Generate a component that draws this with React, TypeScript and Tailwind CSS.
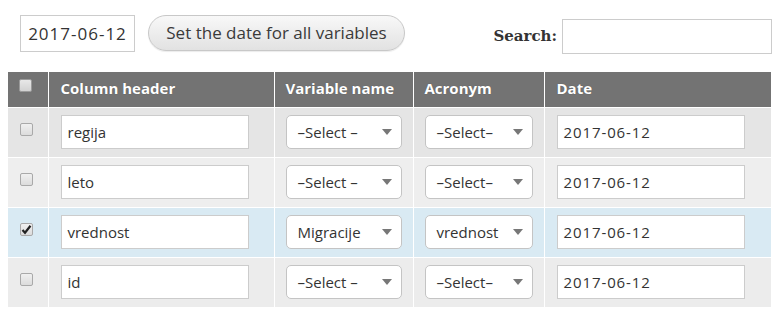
import React from 'react';

type Row = { header: string; variable: string; acronym: string; date: string; checked?: boolean };

const rows: Row[] = [
  { header: 'regija', variable: '–Select –', acronym: '–Select–', date: '2017-06-12' },
  { header: 'leto', variable: '–Select –', acronym: '–Select–', date: '2017-06-12' },
  { header: 'vrednost', variable: 'Migracije', acronym: 'vrednost', date: '2017-06-12', checked: true },
  { header: 'id', variable: '–Select –', acronym: '–Select–', date: '2017-06-12' },
];

const rowBg = ['bg-[#e5e5e5]', 'bg-[#eeeeee]', 'bg-[#d9eaf3]', 'bg-[#ececec]'];

function Check({ checked, header }: { checked?: boolean; header?: boolean }) {
  return (
    <span
      className={
        'flex h-[13px] w-[13px] items-center justify-center rounded-[2px] border ' +
        (header
          ? 'border-[#9a9a9a] bg-gradient-to-b from-[#e8e8e8] to-[#d2d2d2]'
          : 'border-[#a9a9a9] bg-gradient-to-b from-[#f0f0f0] to-[#dcdcdc]')
      }
    >
      {checked && (
        <svg width="11" height="11" viewBox="0 0 11 11">
          <path d="M1.5 6 L4 8.8 L9.5 1.8" fill="none" stroke="#222" strokeWidth="2.2" />
        </svg>
      )}
    </span>
  );
}

function Select({ value, w }: { value: string; w: string }) {
  return (
    <div
      className={
        'flex h-[34px] items-center justify-between rounded-[5px] border border-[#c4c4c4] bg-white pl-[11px] pr-[9px] ' + w
      }
    >
      <span className="text-[15px] text-[#333]">{value}</span>
      <svg width="10" height="6" viewBox="0 0 10 6">
        <path d="M0 0 H10 L5 6 Z" fill="#777" />
      </svg>
    </div>
  );
}

function TextBox({ value, date }: { value: string; date?: boolean }) {
  return (
    <div
      className={
        'flex h-[34px] w-[188px] items-center border border-[#cccccc] bg-white px-[6px] text-[15px] text-[#333] ' +
        (date ? 'tracking-[0.9px]' : '')
      }
    >
      {value}
    </div>
  );
}

export default function App() {
  return (
    <div className="h-[319px] w-[779px] bg-white font-['Open_Sans',sans-serif] text-[#333]">
      <div className="flex h-[52px] items-start pl-[20px] pt-[15px]">
        <div className="flex h-[37px] w-[115px] items-center justify-center border border-[#cccccc] text-[17px] tracking-[1px] text-[#333]">
          2017-06-12
        </div>
        <button className="ml-[13px] h-[36px] w-[257px] rounded-full border border-[#c8c8c8] bg-gradient-to-b from-[#f8f8f8] to-[#e2e2e2] text-[17px] text-[#3a3a3a] shadow-[0_1px_1px_rgba(0,0,0,0.08)]">
          Set the date for all variables
        </button>
        <div className="ml-auto mr-[7px] mt-[4px] flex items-center">
          <span className="mr-[5px] font-['DejaVu_Serif',serif] text-[15px] font-bold text-[#333]">Search:</span>
          <div className="h-[35px] w-[210px] border border-[#cccccc]" />
        </div>
      </div>

      <table className="ml-[8px] mt-[20px] w-[763px] table-fixed border-collapse">
        <colgroup>
          <col className="w-[40px]" />
          <col className="w-[226px]" />
          <col className="w-[139px]" />
          <col className="w-[131px]" />
          <col className="w-[227px]" />
        </colgroup>
        <thead>
          <tr className="h-[35px] bg-[#737373] text-left text-[15px] font-bold text-white [text-shadow:0_0_1px_rgba(0,0,0,0.3)]">
            <th className="border-r border-b border-white pl-[11px] align-top pt-[7px]">
              <Check header />
            </th>
            <th className="border-r border-b border-white pl-[12px] pb-[3px]">Column header</th>
            <th className="border-r border-b border-white pl-[11px] pb-[3px]">Variable name</th>
            <th className="border-r border-b border-white pl-[11px] pb-[3px]">Acronym</th>
            <th className="border-b border-white pl-[12px] pb-[3px]">Date</th>
          </tr>
        </thead>
        <tbody>
          {rows.map((r, i) => (
            <tr key={i} className={'h-[50px] ' + rowBg[i]}>
              <td className="border-r border-b border-white pl-[12px] align-top pt-[15px]">
                <Check checked={r.checked} />
              </td>
              <td className="border-r border-b border-white pl-[12px]">
                <TextBox value={r.header} />
              </td>
              <td className="border-r border-b border-white pl-[11px]">
                <Select value={r.variable} w="w-[116px]" />
              </td>
              <td className="border-r border-b border-white pl-[11px]">
                <Select value={r.acronym} w="w-[108px]" />
              </td>
              <td className="border-b border-white pl-[12px]">
                <TextBox value={r.date} date />
              </td>
            </tr>
          ))}
        </tbody>
      </table>
    </div>
  );
}
